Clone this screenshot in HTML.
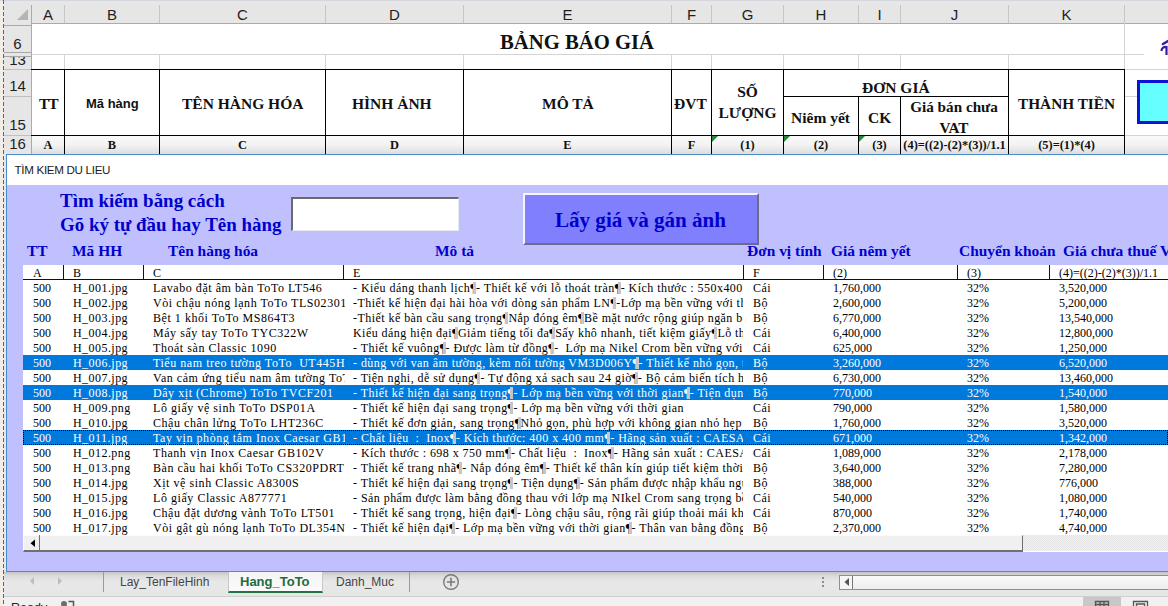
<!DOCTYPE html>
<html><head><meta charset="utf-8">
<style>
*{box-sizing:border-box;margin:0;padding:0}
html,body{width:1168px;height:606px;overflow:hidden;background:#fff;position:relative;font-family:"Liberation Sans",sans-serif}
.a{position:absolute}
.hl{position:absolute;height:1px}
.vl{position:absolute;width:1px}
.ch{position:absolute;top:1px;height:22px;font-size:15px;color:#1e1e1e;text-align:center;line-height:27px}
.rh{position:absolute;left:4px;width:27px;font-size:15px;color:#1e1e1e;text-align:center;line-height:16px}
.sb{font-family:"Liberation Serif",serif;font-weight:bold;color:#111;position:absolute;white-space:nowrap}
.r16{font-family:"Liberation Serif",serif;font-weight:bold;color:#111;position:absolute;font-size:12.4px;text-align:center;top:138px;line-height:14px;white-space:nowrap}
.bl{position:absolute;font-family:"Liberation Serif",serif;font-weight:bold;color:#0000cc;white-space:nowrap}
.lab{top:241.5px;font-size:15.45px;line-height:18px}
.lh{position:absolute;left:0;width:1145px;height:15px;font-family:"Liberation Serif",serif;font-size:12px;line-height:15px;color:#000}
.lr{position:absolute;left:0;width:1145px;height:15px;font-family:"Liberation Serif",serif;font-size:12px;line-height:15px;color:#000}
.lr.sel{background:#0079dc;color:#fff}
.c{position:absolute;top:0;height:16px;padding-top:1px;overflow:hidden;white-space:pre;padding-left:10px;letter-spacing:0.5px}
.c.num{letter-spacing:0}
.lh .c{letter-spacing:0}
.pb{display:inline-block;width:3px;height:12px;background:#c4c4cc;vertical-align:-2px;margin-left:-3px}
.tab{top:575px;font-size:12px;color:#444;line-height:14px;white-space:nowrap}
</style></head><body>
<!-- top strip -->
<div class="a" style="left:0;top:0;width:1168px;height:1px;background:#d6d6de"></div>
<!-- column header bar -->
<div class="a" style="left:4px;top:1px;width:1164px;height:22px;background:#e6e6e6"></div>
<div class="hl" style="left:31px;top:23px;width:1137px;background:#ababab"></div>
<!-- row header column -->
<div class="a" style="left:4px;top:23px;width:27px;height:583px;background:#e6e6e6"></div>
<div class="vl" style="left:31px;top:5px;height:567px;background:#ababab"></div>
<div class="hl" style="left:4px;top:25px;width:27px;background:#ababab"></div>
<!-- corner triangle -->
<svg class="a" style="left:4px;top:1px" width="27" height="22"><polygon points="13,19 24,19 24,8" fill="#b4b4b4"/></svg>
<!-- left strip + dashed line -->
<div class="a" style="left:0;top:1px;width:4px;height:605px;background:#f3ede8"></div>
<div class="a" style="left:3px;top:0;width:1px;height:606px;background:repeating-linear-gradient(to bottom,#2c6fb5 0 4px,transparent 4px 6px)"></div>

<!-- column header separators -->
<div class="vl" style="left:64px;top:5px;height:18px;background:#c6c6c6"></div>
<div class="vl" style="left:159px;top:5px;height:18px;background:#c6c6c6"></div>
<div class="vl" style="left:325px;top:5px;height:18px;background:#c6c6c6"></div>
<div class="vl" style="left:463px;top:5px;height:18px;background:#c6c6c6"></div>
<div class="vl" style="left:671px;top:5px;height:18px;background:#c6c6c6"></div>
<div class="vl" style="left:711px;top:5px;height:18px;background:#c6c6c6"></div>
<div class="vl" style="left:783px;top:5px;height:18px;background:#c6c6c6"></div>
<div class="vl" style="left:858px;top:5px;height:18px;background:#c6c6c6"></div>
<div class="vl" style="left:900px;top:5px;height:18px;background:#c6c6c6"></div>
<div class="vl" style="left:1008px;top:5px;height:18px;background:#c6c6c6"></div>
<div class="vl" style="left:1124px;top:5px;height:18px;background:#c6c6c6"></div>
<!-- column letters -->
<div class="ch" style="left:32px;width:32px">A</div>
<div class="ch" style="left:65px;width:94px">B</div>
<div class="ch" style="left:160px;width:165px">C</div>
<div class="ch" style="left:326px;width:137px">D</div>
<div class="ch" style="left:464px;width:207px">E</div>
<div class="ch" style="left:672px;width:39px">F</div>
<div class="ch" style="left:712px;width:71px">G</div>
<div class="ch" style="left:784px;width:74px">H</div>
<div class="ch" style="left:859px;width:41px">I</div>
<div class="ch" style="left:901px;width:107px">J</div>
<div class="ch" style="left:1009px;width:115px">K</div>

<!-- row header separators & numbers -->
<div class="hl" style="left:4px;top:52px;width:27px;background:#a8a8a8"></div>
<div class="hl" style="left:4px;top:56px;width:27px;background:#a8a8a8"></div>
<div class="hl" style="left:4px;top:69px;width:27px;background:#c0c0c0"></div>
<div class="hl" style="left:4px;top:96px;width:27px;background:#c0c0c0"></div>
<div class="hl" style="left:4px;top:135px;width:27px;background:#c0c0c0"></div>
<div class="rh" style="top:36px">6</div>
<div class="rh" style="top:57px;height:12px;overflow:hidden"><span style="position:relative;top:-5.5px">13</span></div>
<div class="rh" style="top:78px">14</div>
<div class="rh" style="top:117px">15</div>
<div class="rh" style="top:136px">16</div>
<!-- grid light lines -->
<div class="hl" style="left:32px;top:54px;width:1112px;background:#d4d4d4"></div>
<div class="vl" style="left:64px;top:55px;height:14px;background:#d4d4d4"></div>
<div class="vl" style="left:159px;top:55px;height:14px;background:#d4d4d4"></div>
<div class="vl" style="left:325px;top:55px;height:14px;background:#d4d4d4"></div>
<div class="vl" style="left:463px;top:55px;height:14px;background:#d4d4d4"></div>
<div class="vl" style="left:671px;top:55px;height:14px;background:#d4d4d4"></div>
<div class="vl" style="left:711px;top:55px;height:14px;background:#d4d4d4"></div>
<div class="vl" style="left:783px;top:55px;height:14px;background:#d4d4d4"></div>
<div class="vl" style="left:858px;top:55px;height:14px;background:#d4d4d4"></div>
<div class="vl" style="left:900px;top:55px;height:14px;background:#d4d4d4"></div>
<div class="vl" style="left:1008px;top:55px;height:14px;background:#d4d4d4"></div>
<div class="vl" style="left:1124px;top:23px;height:131px;background:#d4d4d4"></div>
<div class="hl" style="left:1124px;top:69px;width:44px;background:#d4d4d4"></div>
<div class="hl" style="left:1124px;top:96px;width:44px;background:#d4d4d4"></div>
<div class="hl" style="left:1124px;top:135px;width:44px;background:#d4d4d4"></div>

<!-- title -->
<div class="sb" style="left:500px;top:30px;font-size:20.7px;line-height:24px">BẢNG BÁO GIÁ</div>

<!-- row 16 gradient -->
<div class="a" style="left:32px;top:136px;width:1136px;height:18px;background:linear-gradient(#fafafa,#f2f2f2 50%,#dedede)"></div>

<!-- table borders -->
<div class="a" style="left:31px;top:69px;width:1094px;height:1px;background:#000"></div>
<div class="a" style="left:31px;top:135px;width:1094px;height:1px;background:#000"></div>
<div class="a" style="left:783px;top:96px;width:225px;height:1px;background:#000"></div>
<div class="a" style="left:64px;top:69px;width:1px;height:85px;background:#000"></div>
<div class="a" style="left:159px;top:69px;width:1px;height:85px;background:#000"></div>
<div class="a" style="left:325px;top:69px;width:1px;height:85px;background:#000"></div>
<div class="a" style="left:463px;top:69px;width:1px;height:85px;background:#000"></div>
<div class="a" style="left:671px;top:69px;width:1px;height:85px;background:#000"></div>
<div class="a" style="left:711px;top:69px;width:1px;height:85px;background:#000"></div>
<div class="a" style="left:783px;top:69px;width:1px;height:85px;background:#000"></div>
<div class="a" style="left:1008px;top:69px;width:1px;height:85px;background:#000"></div>
<div class="a" style="left:1124px;top:69px;width:1px;height:85px;background:#000"></div>
<div class="a" style="left:858px;top:96px;width:1px;height:58px;background:#000"></div>
<div class="a" style="left:900px;top:96px;width:1px;height:58px;background:#000"></div>
<!-- header texts -->
<div class="sb" style="left:39px;top:95px;font-size:15.5px;letter-spacing:-1px">TT</div>
<div class="a" style="left:86px;top:96px;font-size:13px;font-weight:bold;color:#111;white-space:nowrap">Mã hàng</div>
<div class="sb" style="left:182px;top:95px;font-size:15.5px">TÊN HÀNG HÓA</div>
<div class="sb" style="left:352px;top:95px;font-size:15.5px">HÌNH ẢNH</div>
<div class="sb" style="left:542px;top:95px;font-size:15.5px">MÔ TẢ</div>
<div class="sb" style="left:674px;top:95px;font-size:15.5px">ĐVT</div>
<div class="sb" style="left:712px;top:80.5px;width:71px;text-align:center;font-size:15.5px;line-height:21px">SỐ<br>LƯỢNG</div>
<div class="sb" style="left:862px;top:78.5px;font-size:15.5px">ĐƠN GIÁ</div>
<div class="sb" style="left:791px;top:109px;font-size:15.5px">Niêm yết</div>
<div class="sb" style="left:868px;top:109px;font-size:15.5px">CK</div>
<div class="sb" style="left:900px;top:96px;width:108px;text-align:center;font-size:15.2px;line-height:21px">Giá bán chưa<br>VAT</div>
<div class="sb" style="left:1018px;top:94.5px;font-size:15.3px">THÀNH TIỀN</div>

<!-- row 16 labels -->
<div class="r16" style="left:32px;width:32px">A</div>
<div class="r16" style="left:65px;width:94px">B</div>
<div class="r16" style="left:160px;width:165px">C</div>
<div class="r16" style="left:326px;width:137px">D</div>
<div class="r16" style="left:464px;width:207px">E</div>
<div class="r16" style="left:672px;width:39px">F</div>
<div class="r16" style="left:712px;width:71px">(1)</div>
<div class="r16" style="left:784px;width:74px">(2)</div>
<div class="r16" style="left:859px;width:41px">(3)</div>
<div class="r16" style="left:901px;width:107px">(4)=((2)-(2)*(3))/1.1</div>
<div class="r16" style="left:1009px;width:115px">(5)=(1)*(4)</div>
<!-- green triangles -->
<svg class="a" style="left:712px;top:136px" width="8" height="8"><polygon points="0,0 6,0 0,6" fill="#1e8a3a"/></svg>
<svg class="a" style="left:784px;top:136px" width="8" height="8"><polygon points="0,0 6,0 0,6" fill="#1e8a3a"/></svg>
<svg class="a" style="left:859px;top:136px" width="8" height="8"><polygon points="0,0 6,0 0,6" fill="#1e8a3a"/></svg>

<!-- right side shape -->
<div class="a" style="left:1137px;top:80px;width:40px;height:44px;background:#66ffff;border:3px solid #0a14d8"></div>
<svg class="a" style="left:1158px;top:38px" width="10" height="18"><path d="M5,6 L10,3" stroke="#3320a8" stroke-width="2.6" stroke-linecap="round" fill="none"/><path d="M3.5,13 C3.5,10 6,8.5 8.5,9 L8.5,17" stroke="#3320a8" stroke-width="2.2" fill="none"/></svg>

<!-- DIALOG -->
<div class="a" style="left:6px;top:154px;width:1170px;height:418px;border:1px solid #4a8ccc;background:#c0c0ff"></div>
<div class="a" style="left:7px;top:155px;width:1161px;height:30px;background:#fff"></div>
<div class="a" style="left:14.5px;top:162px;font-size:11.6px;letter-spacing:-0.3px;color:#1a1a1a;line-height:16px;white-space:nowrap">TÌM KIEM DU LIEU</div>
<div class="bl" style="left:60px;top:189px;font-size:18.95px;line-height:24px">Tìm kiếm bằng cách</div>
<div class="bl" style="left:60px;top:213px;font-size:18.95px;line-height:24px">Gõ ký tự đầu hay Tên hàng</div>
<!-- textbox -->
<div class="a" style="left:291px;top:197px;width:168px;height:34px;background:#fff;border-top:2px solid #6a6a6a;border-left:2px solid #6a6a6a;border-right:1px solid #e8e8f0;border-bottom:1px solid #e8e8f0"></div>
<!-- button -->
<div class="a" style="left:523px;top:193px;width:236px;height:52px;background:#8080ff;border-top:2px solid #f4f4ff;border-left:2px solid #f4f4ff;border-right:2px solid #6b6b8a;border-bottom:2px solid #6b6b8a"></div>
<div class="bl" style="left:523px;top:206.5px;width:235px;text-align:center;font-size:21.1px;line-height:26px">Lấy giá và gán ảnh</div>
<!-- column labels -->
<div class="bl lab" style="left:27px">TT</div>
<div class="bl lab" style="left:72px">Mã HH</div>
<div class="bl lab" style="left:168px">Tên hàng hóa</div>
<div class="bl lab" style="left:435px">Mô tả</div>
<div class="bl lab" style="left:747px">Đơn vị tính</div>
<div class="bl lab" style="left:831px">Giá nêm yết</div>
<div class="bl lab" style="left:959px">Chuyển khoản</div>
<div class="bl lab" style="left:1063px">Giá chưa thuế VAT</div>
<!-- listbox -->
<div class="a" style="left:23px;top:265px;width:1145px;height:287px;background:#fff;overflow:hidden" id="lb">
<div class="lh" style="top:0">
<div class="c" style="left:0;width:40px">A</div>
<div class="c" style="left:40px;width:80px">B</div>
<div class="c" style="left:120px;width:200px">C</div>
<div class="c" style="left:320px;width:400px">E</div>
<div class="c" style="left:720px;width:80px">F</div>
<div class="c" style="left:800px;width:134px">(2)</div>
<div class="c" style="left:934px;width:92px">(3)</div>
<div class="c" style="left:1026px;width:130px">(4)=((2)-(2)*(3))/1.1</div>
</div>
<div class="vl" style="left:40px;top:0;height:14px;background:#111"></div>
<div class="vl" style="left:120px;top:0;height:14px;background:#111"></div>
<div class="vl" style="left:320px;top:0;height:14px;background:#111"></div>
<div class="vl" style="left:720px;top:0;height:14px;background:#111"></div>
<div class="vl" style="left:800px;top:0;height:14px;background:#111"></div>
<div class="vl" style="left:934px;top:0;height:14px;background:#111"></div>
<div class="vl" style="left:1026px;top:0;height:14px;background:#111"></div>
<div class="hl" style="left:0;top:14px;width:1145px;background:#111"></div>
<div style="position:absolute;left:0;top:-265px;width:1145px">
<div class="lr" style="top:280px">
<div class="c num" style="left:0px;width:40px;letter-spacing:0px">500</div>
<div class="c" style="left:40px;width:80px;letter-spacing:0.45px">H_001.jpg</div>
<div class="c" style="left:120px;width:202px;letter-spacing:0.55px">Lavabo đặt âm bàn ToTo LT546</div>
<div class="c" style="left:320px;width:400px;letter-spacing:0.45px">- Kiểu dáng thanh lịch¶<b class=pb></b>- Thiết kế với lỗ thoát tràn¶<b class=pb></b>- Kích thước : 550x400 mm¶<b class=pb></b></div>
<div class="c" style="left:720px;width:80px;letter-spacing:0.5px">Cái</div>
<div class="c num" style="left:800px;width:134px;letter-spacing:0px">1,760,000</div>
<div class="c num" style="left:934px;width:92px;letter-spacing:0px">32%</div>
<div class="c num" style="left:1026px;width:119px;letter-spacing:0px">3,520,000</div>
</div>
<div class="lr" style="top:295px">
<div class="c num" style="left:0px;width:40px;letter-spacing:0px">500</div>
<div class="c" style="left:40px;width:80px;letter-spacing:0.45px">H_002.jpg</div>
<div class="c" style="left:120px;width:202px;letter-spacing:0.55px">Vòi chậu nóng lạnh ToTo TLS02301</div>
<div class="c" style="left:320px;width:400px;letter-spacing:0.45px">-Thiết kế hiện đại hài hòa với dòng sản phẩm LN¶<b class=pb></b>-Lớp mạ bền vững với thời gian</div>
<div class="c" style="left:720px;width:80px;letter-spacing:0.5px">Bộ</div>
<div class="c num" style="left:800px;width:134px;letter-spacing:0px">2,600,000</div>
<div class="c num" style="left:934px;width:92px;letter-spacing:0px">32%</div>
<div class="c num" style="left:1026px;width:119px;letter-spacing:0px">5,200,000</div>
</div>
<div class="lr" style="top:310px">
<div class="c num" style="left:0px;width:40px;letter-spacing:0px">500</div>
<div class="c" style="left:40px;width:80px;letter-spacing:0.45px">H_003.jpg</div>
<div class="c" style="left:120px;width:202px;letter-spacing:0.55px">Bệt 1 khối ToTo MS864T3</div>
<div class="c" style="left:320px;width:400px;letter-spacing:0.45px">-Thiết kế bàn cầu sang trọng¶<b class=pb></b>Nắp đóng êm¶<b class=pb></b>Bề mặt nước rộng giúp ngăn bám bẩn</div>
<div class="c" style="left:720px;width:80px;letter-spacing:0.5px">Bộ</div>
<div class="c num" style="left:800px;width:134px;letter-spacing:0px">6,770,000</div>
<div class="c num" style="left:934px;width:92px;letter-spacing:0px">32%</div>
<div class="c num" style="left:1026px;width:119px;letter-spacing:0px">13,540,000</div>
</div>
<div class="lr" style="top:325px">
<div class="c num" style="left:0px;width:40px;letter-spacing:0px">500</div>
<div class="c" style="left:40px;width:80px;letter-spacing:0.45px">H_004.jpg</div>
<div class="c" style="left:120px;width:202px;letter-spacing:0.55px">Máy sấy tay ToTo TYC322W</div>
<div class="c" style="left:320px;width:400px;letter-spacing:0.45px">Kiểu dáng hiện đại¶<b class=pb></b>Giảm tiếng tối đa¶<b class=pb></b>Sấy khô nhanh, tiết kiệm giấy¶<b class=pb></b>Lỗ thoát</div>
<div class="c" style="left:720px;width:80px;letter-spacing:0.5px">Cái</div>
<div class="c num" style="left:800px;width:134px;letter-spacing:0px">6,400,000</div>
<div class="c num" style="left:934px;width:92px;letter-spacing:0px">32%</div>
<div class="c num" style="left:1026px;width:119px;letter-spacing:0px">12,800,000</div>
</div>
<div class="lr" style="top:340px">
<div class="c num" style="left:0px;width:40px;letter-spacing:0px">500</div>
<div class="c" style="left:40px;width:80px;letter-spacing:0.45px">H_005.jpg</div>
<div class="c" style="left:120px;width:202px;letter-spacing:0.55px">Thoát sàn Classic 1090</div>
<div class="c" style="left:320px;width:400px;letter-spacing:0.45px">- Thiết kế vuông¶<b class=pb></b>- Được làm từ đồng¶<b class=pb></b>-  Lớp mạ Nikel Crom bền vững với thời</div>
<div class="c" style="left:720px;width:80px;letter-spacing:0.5px">Cái</div>
<div class="c num" style="left:800px;width:134px;letter-spacing:0px">625,000</div>
<div class="c num" style="left:934px;width:92px;letter-spacing:0px">32%</div>
<div class="c num" style="left:1026px;width:119px;letter-spacing:0px">1,250,000</div>
</div>
<div class="lr sel" style="top:355px">
<div class="c num" style="left:0px;width:40px;letter-spacing:0px">500</div>
<div class="c" style="left:40px;width:80px;letter-spacing:0.45px">H_006.jpg</div>
<div class="c" style="left:120px;width:202px;letter-spacing:0.55px">Tiểu nam treo tường ToTo  UT445H</div>
<div class="c" style="left:320px;width:400px;letter-spacing:0.45px">- dùng với van âm tường, kèm nối tường VM3D006Y¶<b class=pb></b>- Thiết kế nhỏ gọn, tiện</div>
<div class="c" style="left:720px;width:80px;letter-spacing:0.5px">Bộ</div>
<div class="c num" style="left:800px;width:134px;letter-spacing:0px">3,260,000</div>
<div class="c num" style="left:934px;width:92px;letter-spacing:0px">32%</div>
<div class="c num" style="left:1026px;width:119px;letter-spacing:0px">6,520,000</div>
</div>
<div class="lr" style="top:370px">
<div class="c num" style="left:0px;width:40px;letter-spacing:0px">500</div>
<div class="c" style="left:40px;width:80px;letter-spacing:0.45px">H_007.jpg</div>
<div class="c" style="left:120px;width:202px;letter-spacing:0.55px">Van cảm ứng tiểu nam âm tường ToTo</div>
<div class="c" style="left:320px;width:400px;letter-spacing:0.45px">- Tiện nghi, dễ sử dụng¶<b class=pb></b>- Tự động xả sạch sau 24 giờ¶<b class=pb></b>- Bộ cảm biến tích hợp</div>
<div class="c" style="left:720px;width:80px;letter-spacing:0.5px">Bộ</div>
<div class="c num" style="left:800px;width:134px;letter-spacing:0px">6,730,000</div>
<div class="c num" style="left:934px;width:92px;letter-spacing:0px">32%</div>
<div class="c num" style="left:1026px;width:119px;letter-spacing:0px">13,460,000</div>
</div>
<div class="lr sel" style="top:385px">
<div class="c num" style="left:0px;width:40px;letter-spacing:0px">500</div>
<div class="c" style="left:40px;width:80px;letter-spacing:0.45px">H_008.jpg</div>
<div class="c" style="left:120px;width:202px;letter-spacing:0.55px">Dây xịt (Chrome) ToTo TVCF201</div>
<div class="c" style="left:320px;width:400px;letter-spacing:0.45px">- Thiết kế hiện đại sang trọng¶<b class=pb></b>- Lớp mạ bền vững với thời gian¶<b class=pb></b>- Tiện dụng</div>
<div class="c" style="left:720px;width:80px;letter-spacing:0.5px">Bộ</div>
<div class="c num" style="left:800px;width:134px;letter-spacing:0px">770,000</div>
<div class="c num" style="left:934px;width:92px;letter-spacing:0px">32%</div>
<div class="c num" style="left:1026px;width:119px;letter-spacing:0px">1,540,000</div>
</div>
<div class="lr" style="top:400px">
<div class="c num" style="left:0px;width:40px;letter-spacing:0px">500</div>
<div class="c" style="left:40px;width:80px;letter-spacing:0.45px">H_009.png</div>
<div class="c" style="left:120px;width:202px;letter-spacing:0.55px">Lô giấy vệ sinh ToTo DSP01A</div>
<div class="c" style="left:320px;width:400px;letter-spacing:0.45px">- Thiết kế hiện đại sang trọng¶<b class=pb></b>- Lớp mạ bền vững với thời gian</div>
<div class="c" style="left:720px;width:80px;letter-spacing:0.5px">Cái</div>
<div class="c num" style="left:800px;width:134px;letter-spacing:0px">790,000</div>
<div class="c num" style="left:934px;width:92px;letter-spacing:0px">32%</div>
<div class="c num" style="left:1026px;width:119px;letter-spacing:0px">1,580,000</div>
</div>
<div class="lr" style="top:415px">
<div class="c num" style="left:0px;width:40px;letter-spacing:0px">500</div>
<div class="c" style="left:40px;width:80px;letter-spacing:0.45px">H_010.jpg</div>
<div class="c" style="left:120px;width:202px;letter-spacing:0.55px">Chậu chân lửng ToTo LHT236C</div>
<div class="c" style="left:320px;width:400px;letter-spacing:0.45px">- Thiết kế đơn giản, sang trọng¶<b class=pb></b>Nhỏ gọn, phù hợp với không gian nhỏ hẹp</div>
<div class="c" style="left:720px;width:80px;letter-spacing:0.5px">Bộ</div>
<div class="c num" style="left:800px;width:134px;letter-spacing:0px">1,760,000</div>
<div class="c num" style="left:934px;width:92px;letter-spacing:0px">32%</div>
<div class="c num" style="left:1026px;width:119px;letter-spacing:0px">3,520,000</div>
</div>
<div class="lr sel" style="top:430px">
<div class="c num" style="left:0px;width:40px;letter-spacing:0px">500</div>
<div class="c" style="left:40px;width:80px;letter-spacing:0.45px">H_011.jpg</div>
<div class="c" style="left:120px;width:202px;letter-spacing:0.55px">Tay vịn phòng tắm Inox Caesar GB101</div>
<div class="c" style="left:320px;width:400px;letter-spacing:0.45px">- Chất liệu  :  Inox¶<b class=pb></b>- Kích thước: 400 x 400 mm¶<b class=pb></b>- Hãng sản xuất : CAESAR¶<b class=pb></b></div>
<div class="c" style="left:720px;width:80px;letter-spacing:0.5px">Cái</div>
<div class="c num" style="left:800px;width:134px;letter-spacing:0px">671,000</div>
<div class="c num" style="left:934px;width:92px;letter-spacing:0px">32%</div>
<div class="c num" style="left:1026px;width:119px;letter-spacing:0px">1,342,000</div>
</div>
<div class="lr" style="top:445px">
<div class="c num" style="left:0px;width:40px;letter-spacing:0px">500</div>
<div class="c" style="left:40px;width:80px;letter-spacing:0.45px">H_012.png</div>
<div class="c" style="left:120px;width:202px;letter-spacing:0.55px">Thanh vịn Inox Caesar GB102V</div>
<div class="c" style="left:320px;width:400px;letter-spacing:0.45px">- Kích thước : 698 x 750 mm¶<b class=pb></b>- Chất liệu  :  Inox¶<b class=pb></b>- Hãng sản xuất : CAESAR¶<b class=pb></b></div>
<div class="c" style="left:720px;width:80px;letter-spacing:0.5px">Cái</div>
<div class="c num" style="left:800px;width:134px;letter-spacing:0px">1,089,000</div>
<div class="c num" style="left:934px;width:92px;letter-spacing:0px">32%</div>
<div class="c num" style="left:1026px;width:119px;letter-spacing:0px">2,178,000</div>
</div>
<div class="lr" style="top:460px">
<div class="c num" style="left:0px;width:40px;letter-spacing:0px">500</div>
<div class="c" style="left:40px;width:80px;letter-spacing:0.45px">H_013.png</div>
<div class="c" style="left:120px;width:202px;letter-spacing:0.55px">Bàn cầu hai khối ToTo CS320PDRT</div>
<div class="c" style="left:320px;width:400px;letter-spacing:0.45px">- Thiết kế trang nhã¶<b class=pb></b>- Nắp đóng êm¶<b class=pb></b>- Thiết kế thân kín giúp tiết kiệm thời gian</div>
<div class="c" style="left:720px;width:80px;letter-spacing:0.5px">Bộ</div>
<div class="c num" style="left:800px;width:134px;letter-spacing:0px">3,640,000</div>
<div class="c num" style="left:934px;width:92px;letter-spacing:0px">32%</div>
<div class="c num" style="left:1026px;width:119px;letter-spacing:0px">7,280,000</div>
</div>
<div class="lr" style="top:475px">
<div class="c num" style="left:0px;width:40px;letter-spacing:0px">500</div>
<div class="c" style="left:40px;width:80px;letter-spacing:0.45px">H_014.jpg</div>
<div class="c" style="left:120px;width:202px;letter-spacing:0.55px">Xịt vệ sinh Classic A8300S</div>
<div class="c" style="left:320px;width:400px;letter-spacing:0.45px">- Thiết kế hiện đại sang trọng¶<b class=pb></b>- Tiện dụng¶<b class=pb></b>- Sản phẩm được nhập khẩu nguyên</div>
<div class="c" style="left:720px;width:80px;letter-spacing:0.5px">Bộ</div>
<div class="c num" style="left:800px;width:134px;letter-spacing:0px">388,000</div>
<div class="c num" style="left:934px;width:92px;letter-spacing:0px">32%</div>
<div class="c num" style="left:1026px;width:119px;letter-spacing:0px">776,000</div>
</div>
<div class="lr" style="top:490px">
<div class="c num" style="left:0px;width:40px;letter-spacing:0px">500</div>
<div class="c" style="left:40px;width:80px;letter-spacing:0.45px">H_015.jpg</div>
<div class="c" style="left:120px;width:202px;letter-spacing:0.55px">Lô giấy Classic A877771</div>
<div class="c" style="left:320px;width:400px;letter-spacing:0.45px">- Sản phẩm được làm bằng đồng thau với lớp mạ NIkel Crom sang trọng bền</div>
<div class="c" style="left:720px;width:80px;letter-spacing:0.5px">Cái</div>
<div class="c num" style="left:800px;width:134px;letter-spacing:0px">540,000</div>
<div class="c num" style="left:934px;width:92px;letter-spacing:0px">32%</div>
<div class="c num" style="left:1026px;width:119px;letter-spacing:0px">1,080,000</div>
</div>
<div class="lr" style="top:505px">
<div class="c num" style="left:0px;width:40px;letter-spacing:0px">500</div>
<div class="c" style="left:40px;width:80px;letter-spacing:0.45px">H_016.jpg</div>
<div class="c" style="left:120px;width:202px;letter-spacing:0.55px">Chậu đặt dương vành ToTo LT501</div>
<div class="c" style="left:320px;width:400px;letter-spacing:0.45px">- Thiết kế sang trọng, hiện đại¶<b class=pb></b>- Lòng chậu sâu, rộng rãi giúp thoải mái khi</div>
<div class="c" style="left:720px;width:80px;letter-spacing:0.5px">Cái</div>
<div class="c num" style="left:800px;width:134px;letter-spacing:0px">870,000</div>
<div class="c num" style="left:934px;width:92px;letter-spacing:0px">32%</div>
<div class="c num" style="left:1026px;width:119px;letter-spacing:0px">1,740,000</div>
</div>
<div class="lr" style="top:520px">
<div class="c num" style="left:0px;width:40px;letter-spacing:0px">500</div>
<div class="c" style="left:40px;width:80px;letter-spacing:0.45px">H_017.jpg</div>
<div class="c" style="left:120px;width:202px;letter-spacing:0.55px">Vòi gật gù nóng lạnh ToTo DL354N</div>
<div class="c" style="left:320px;width:400px;letter-spacing:0.45px">- Thiết kế hiện đại¶<b class=pb></b>- Lớp mạ bền vững với thời gian¶<b class=pb></b>- Thân van bằng đồng</div>
<div class="c" style="left:720px;width:80px;letter-spacing:0.5px">Bộ</div>
<div class="c num" style="left:800px;width:134px;letter-spacing:0px">2,370,000</div>
<div class="c num" style="left:934px;width:92px;letter-spacing:0px">32%</div>
<div class="c num" style="left:1026px;width:119px;letter-spacing:0px">4,740,000</div>
</div>
</div>
<!-- focus rect on row 11 -->
<div class="a" style="left:0;top:165px;width:1145px;height:15px;border:1px dotted #000"></div>
<!-- h scrollbar -->
<div class="a" style="left:1000px;top:270px;width:145px;height:16px;background:repeating-conic-gradient(#f4f4f4 0 25%,#e2e2e2 0 50%) 0 0/2px 2px"></div>
<div class="a" style="left:0;top:270px;width:1000px;height:17px;background:#f0f0f0;border-top:1px solid #fbfbfb;border-left:1px solid #fbfbfb;border-right:1px solid #6e6e6e;border-bottom:2px solid #707070"></div>
<div class="a" style="left:16px;top:270px;width:1px;height:16px;background:#707070"></div>
<svg class="a" style="left:6px;top:274px" width="8" height="9"><polygon points="6,0.5 6,8 1.5,4.25" fill="#000"/></svg>
</div>
<!-- TAB BAR -->
<div class="a" style="left:4px;top:572px;width:1164px;height:24px;background:linear-gradient(#c4c4c4,#dcdcdc 4px,#e8e8e8 10px,#e6e6e6)"></div>
<svg class="a" style="left:27px;top:576px" width="40" height="10"><polygon points="7,1 7,9 3,5" fill="#bdbdbd"/><polygon points="31,1 31,9 35,5" fill="#bdbdbd"/></svg>
<div class="vl" style="left:103px;top:572px;height:20px;background:#9a9a9a"></div>
<div class="a tab" style="left:120px;">Lay_TenFileHinh</div>
<div class="a" style="left:228px;top:572px;width:95px;height:21px;background:linear-gradient(#f4f4f4,#fbfbfb);border-left:1px solid #c8c8c8;border-right:1px solid #c8c8c8;border-bottom:2px solid #217346"></div>
<div class="a tab" style="left:240px;font-weight:bold;color:#1f6b40;font-size:13px">Hang_ToTo</div>
<div class="a tab" style="left:336px;">Danh_Muc</div>
<div class="vl" style="left:409px;top:572px;height:20px;background:#9a9a9a"></div>
<svg class="a" style="left:442px;top:573px" width="18" height="18"><circle cx="9" cy="9" r="7.3" fill="none" stroke="#7a7a7a" stroke-width="1.4"/><path d="M9,4.8 V13.2 M4.8,9 H13.2" stroke="#7a7a7a" stroke-width="1.6"/></svg>
<svg class="a" style="left:820px;top:576px" width="6" height="12"><rect x="2" y="1" width="2" height="2" fill="#8c8c8c"/><rect x="2" y="5" width="2" height="2" fill="#8c8c8c"/><rect x="2" y="9" width="2" height="2" fill="#8c8c8c"/></svg>
<div class="a" style="left:839px;top:575px;width:340px;height:15px;border:1px solid #8e8e8e;background:linear-gradient(#fafafa,#ececec)"></div>
<div class="a" style="left:840px;top:576px;width:13px;height:13px;background:#f6f6f6;border-right:1px solid #777"></div>
<svg class="a" style="left:843px;top:578px" width="8" height="9"><polygon points="6,0 6,8 1.5,4" fill="#555"/></svg>
<!-- STATUS BAR -->
<div class="a" style="left:4px;top:596px;width:1164px;height:10px;background:#f1f1f1;border-top:1px solid #cfcfcf"></div>
<div class="a" style="left:11px;top:600px;font-size:12.5px;color:#222;line-height:16px;white-space:nowrap">Ready</div>
<svg class="a" style="left:60px;top:599px" width="16" height="8"><circle cx="4" cy="5" r="3" fill="#6e6e6e"/><path d="M8.5,2.5 H13.5 V8" stroke="#555" stroke-width="1.5" fill="none"/></svg>
<div class="a" style="left:1083px;top:597px;width:38px;height:9px;background:#c8c8c8"></div>
<svg class="a" style="left:1094px;top:600px" width="16" height="7"><path d="M1.5,7 V1.5 H14.5 V7 M1,4.5 H15 M6,1.5 V7 M10,1.5 V7" stroke="#555" stroke-width="1.3" fill="none"/></svg>
<svg class="a" style="left:1132px;top:600px" width="17" height="7"><path d="M1.5,7 V1.5 H15.5 V7 M4.5,7 V4 H12.5 V7" stroke="#555" stroke-width="1.3" fill="none"/></svg>
</body></html>
